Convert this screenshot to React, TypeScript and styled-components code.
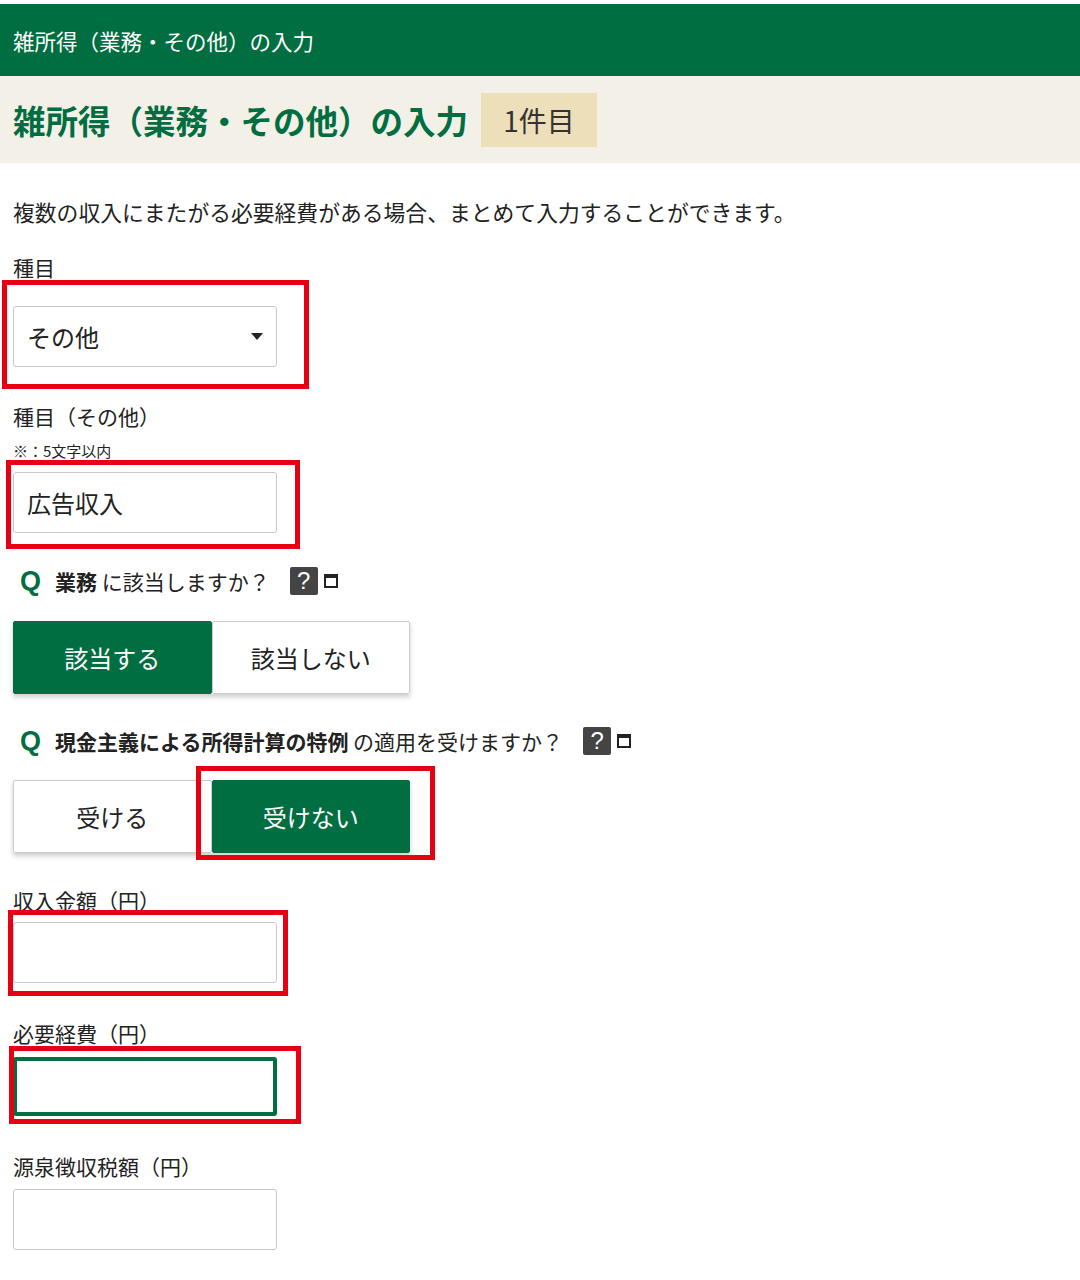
import React from "react";
import styled, { createGlobalStyle } from "styled-components";

const G = createGlobalStyle`
  body { margin: 0; background: #fff; font-family: "Noto Sans CJK JP", "Noto Sans", sans-serif; color: #222; }
`;
const Page = styled.div`position: relative; width: 1080px; height: 1280px; overflow: hidden; padding-top: 4px; box-sizing: border-box;`;
const TopBar = styled.div`height: 72px; background: #006e40; color: #fff; display: flex; align-items: center; padding-left: 13px; font-size: 21.5px;`;
const TitleBand = styled.div`height: 87px; background: #f3f0e8; display: flex; align-items: center; padding-left: 13px; gap: 13px;`;
const Title = styled.h1`margin: 0; font-size: 32.5px; font-weight: 700; color: #006e40;`;
const Badge = styled.span`background: #ecdfb9; height: 54px; width: 116px; justify-content: center; display: flex; align-items: center; font-size: 28px; color: #333;`;
const Body = styled.div`padding: 34px 13px 0; display: flex; flex-direction: column;`;
const Desc = styled.p`margin: 0 0 25px; font-size: 21.8px; line-height: 30px; white-space: nowrap;`;
const Label = styled.div<{ $mb: number }>`font-size: 21px; line-height: 30px; margin-bottom: ${p => p.$mb}px;`;
const Note = styled.div`font-size: 15px; line-height: 18px; margin: 11px 0 12px;`;
const Box = styled.div<{ $focus?: boolean; $mb?: number }>`
  width: 264px; height: 61px; box-sizing: border-box; border: ${p => p.$focus ? "4px solid #006e40" : "1px solid #c8c8c8"};
  border-radius: 3px; display: flex; align-items: center; justify-content: space-between; padding: 0 13px; font-size: 24px;
  margin-bottom: ${p => p.$mb ?? 0}px; background: #fff;
`;
const Caret = styled.span`width: 0; height: 0; border-left: 6px solid transparent; border-right: 6px solid transparent; border-top: 7px solid #222;`;
const QRow = styled.div`display: flex; align-items: center; font-size: 21px; height: 40px; padding-left: 7px; margin-bottom: 20px; white-space: nowrap;`;
const Q = styled.span`color: #006e40; font-weight: 700; font-size: 27px; margin-right: 14px; font-family: "Liberation Sans", sans-serif;`;
const Help = styled.span`margin-left: 20px; margin-right: 6px; width: 28px; height: 28px; background: #444; color: #fff; border-radius: 2px; display: flex; align-items: center; justify-content: center; font-size: 24px; font-family: "Liberation Sans", sans-serif;`;
const Win = styled.span`width: 14px; height: 14px; border: 2px solid #222; border-top-width: 4px; box-sizing: border-box;`;
const Seg = styled.div<{ $mb: number }>`display: flex; margin-bottom: ${p => p.$mb}px; box-shadow: 0 3px 5px rgba(0,0,0,0.2); width: 397px;`;
const SegBtn = styled.div<{ $on?: boolean }>`
  width: 199px; height: 73px; display: flex; align-items: center; justify-content: center; font-size: 24px;
  background: ${p => p.$on ? "#006e40" : "#fff"}; color: ${p => p.$on ? "#fff" : "#222"};
  border: 1px solid ${p => p.$on ? "#006e40" : "#ccc"}; box-sizing: border-box; border-radius: 2px;
`;
const Mark = styled.div`position: absolute; border: 5px solid #e60012; box-sizing: border-box; pointer-events: none;`;

const marks = [[2,280,307,109],[6,460,294,89],[196,766,239,94],[8,910,280,86],[9,1046,292,78]];

export default function App() {
  return (
    <Page>
      <G />
      <TopBar>雑所得（業務・その他）の入力</TopBar>
      <TitleBand><Title>雑所得（業務・その他）の入力</Title><Badge>1件目</Badge></TitleBand>
      <Body>
        <Desc>複数の収入にまたがる必要経費がある場合、まとめて入力することができます。</Desc>
        <Label $mb={24}>種目</Label>
        <Box $mb={34}>その他<Caret /></Box>
        <Label $mb={0}>種目（その他）</Label>
        <Note>※：5文字以内</Note>
        <Box $mb={28}>広告収入</Box>
        <QRow><Q>Q</Q><b>業務</b>&nbsp;に該当しますか？<Help>?</Help><Win /></QRow>
        <Seg $mb={27}><SegBtn $on>該当する</SegBtn><SegBtn>該当しない</SegBtn></Seg>
        <QRow style={{ marginBottom: 19 }}><Q>Q</Q><b>現金主義による所得計算の特例</b>&nbsp;の適用を受けますか？<Help>?</Help><Win /></QRow>
        <Seg $mb={32}><SegBtn>受ける</SegBtn><SegBtn $on>受けない</SegBtn></Seg>
        <Label $mb={7}>収入金額（円）</Label>
        <Box $mb={35} />
        <Label $mb={9}>必要経費（円）</Label>
        <Box $focus $mb={35} style={{ height: 59 }} />
        <Label $mb={8}>源泉徴収税額（円）</Label>
        <Box />
      </Body>
      {marks.map(([x, y, w, h], i) => <Mark key={i} style={{ left: x, top: y, width: w, height: h }} />)}
    </Page>
  );
}
